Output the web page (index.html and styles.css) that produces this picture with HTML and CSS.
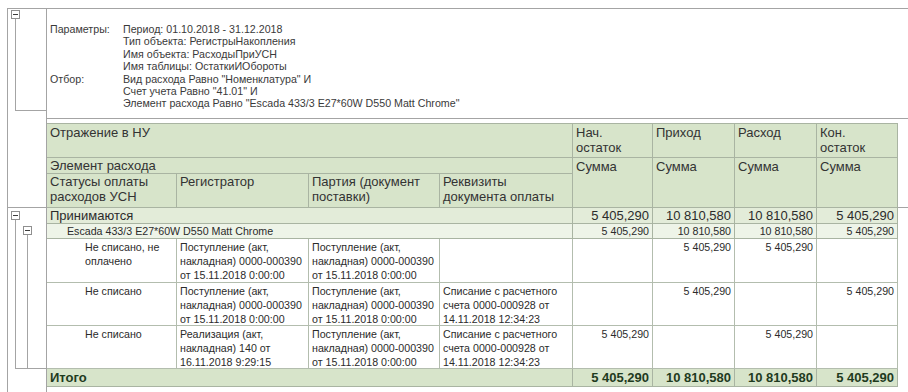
FILE: index.html
```html
<!DOCTYPE html>
<html lang="ru">
<head>
<meta charset="utf-8">
<title>Отчет</title>
<link rel="stylesheet" href="styles.css">
</head>
<body>
<div class="sheet">
  <div class="gut g-params"><span class="tg"></span><div class="bracket"></div></div>
  <div class="params">
    <span class="lbl">Параметры:</span><span>Период: 01.10.2018 - 31.12.2018</span>
    <span></span><span>Тип объекта: РегистрыНакопления</span>
    <span></span><span>Имя объекта: РасходыПриУСН</span>
    <span></span><span>Имя таблицы: ОстаткиИОбороты</span>
    <span class="lbl">Отбор:</span><span>Вид расхода Равно "Номенклатура" И</span>
    <span></span><span>Счет учета Равно "41.01" И</span>
    <span></span><span>Элемент расхода Равно "Escada 433/3 E27*60W D550 Matt Chrome"</span>
  </div>

  <div class="gut g-head"></div>
  <div class="spacer"></div>
  <div class="fill f-head"></div>

  <div class="hd wide r3">Отражение в НУ</div>
  <div class="hd r3">Нач.<br>остаток</div>
  <div class="hd r3">Приход</div>
  <div class="hd r3">Расход</div>
  <div class="hd r3">Кон.<br>остаток</div>

  <div class="hd wide r4 tight">Элемент расхода</div>
  <div class="hd sum">Сумма</div>
  <div class="hd sum">Сумма</div>
  <div class="hd sum">Сумма</div>
  <div class="hd sum">Сумма</div>

  <div class="hd r5 tight">Статусы оплаты<br>расходов УСН</div>
  <div class="hd r5 tight">Регистратор</div>
  <div class="hd r5 tight">Партия (документ<br>поставки)</div>
  <div class="hd r5 tight">Реквизиты<br>документа оплаты</div>

  <div class="gut g-prin"><span class="tg"></span></div>
  <div class="prin wide">Принимаются</div>
  <div class="prin num">5 405,290</div>
  <div class="prin num">10 810,580</div>
  <div class="prin num">10 810,580</div>
  <div class="prin num">5 405,290</div>
  <div class="fill f-body"></div>

  <div class="gut g-esc"><span class="tg"></span></div>
  <div class="esc wide">Escada 433/3 E27*60W D550 Matt Chrome</div>
  <div class="esc num">5 405,290</div>
  <div class="esc num">10 810,580</div>
  <div class="esc num">10 810,580</div>
  <div class="esc num">5 405,290</div>

  <div class="gut g-det"></div>
  <div class="det status">Не списано, не<br>оплачено</div>
  <div class="det">Поступление (акт,<br>накладная) 0000-000390<br>от 15.11.2018 0:00:00</div>
  <div class="det">Поступление (акт,<br>накладная) 0000-000390<br>от 15.11.2018 0:00:00</div>
  <div class="det"></div>
  <div class="det num"></div>
  <div class="det num">5 405,290</div>
  <div class="det num">5 405,290</div>
  <div class="det num"></div>

  <div class="gut g-det"></div>
  <div class="det status">Не списано</div>
  <div class="det">Поступление (акт,<br>накладная) 0000-000390<br>от 15.11.2018 0:00:00</div>
  <div class="det">Поступление (акт,<br>накладная) 0000-000390<br>от 15.11.2018 0:00:00</div>
  <div class="det">Списание с расчетного<br>счета 0000-000928 от<br>14.11.2018 12:34:23</div>
  <div class="det num"></div>
  <div class="det num">5 405,290</div>
  <div class="det num"></div>
  <div class="det num">5 405,290</div>

  <div class="gut g-det g-last"></div>
  <div class="det status">Не списано</div>
  <div class="det">Реализация (акт,<br>накладная) 140 от<br>16.11.2018 9:29:15</div>
  <div class="det">Поступление (акт,<br>накладная) 0000-000390<br>от 15.11.2018 0:00:00</div>
  <div class="det">Списание с расчетного<br>счета 0000-000928 от<br>14.11.2018 12:34:23</div>
  <div class="det num">5 405,290</div>
  <div class="det num"></div>
  <div class="det num">5 405,290</div>
  <div class="det num"></div>

  <div class="gut"></div>
  <div class="tot wide">Итого</div>
  <div class="tot num">5 405,290</div>
  <div class="tot num">10 810,580</div>
  <div class="tot num">10 810,580</div>
  <div class="tot num">5 405,290</div>

  <div class="gut"></div>
</div>
</body>
</html>
```

FILE: styles.css
```css
html, body {
  margin: 0;
  padding: 0;
  overflow: hidden;
  background: #ffffff;
}

body {
  font-family: "Liberation Sans", Arial, sans-serif;
  color: #333333;
}

.sheet {
  margin: 8px 0 0 7px;
  border-top: 1px solid #a4a4a4;
  display: grid;
  grid-template-columns: 40px 130px 132px 131px 133px 80px 82px 82px 81px 1fr;
  grid-template-rows: 110px 5px 34px 16px 34px 16px 15px 44px 43px 43px 18px 5px;
}

.sheet > div {
  box-sizing: border-box;
  min-width: 0;
  white-space: nowrap;
}

/* ---------- gutter (row groups) ---------- */
.gut {
  grid-column: 1;
  border-left: 1px solid #a4a4a4;
  border-right: 1px solid #a4a4a4;
}

.tg {
  box-sizing: border-box;
  display: flex;
  align-items: center;
  justify-content: center;
  width: 9px;
  height: 9px;
  border: 1px solid #8f8f8f;
  background: #ffffff;
}

.tg::after {
  content: "";
  width: 5px;
  height: 1px;
  background: #3c3c3c;
}

.g-params {
  padding: 1px 0 0 3px;
}

.bracket {
  box-sizing: border-box;
  margin-left: 4px;
  width: 31px;
  height: 92px;
  border-left: 1px solid #a4a4a4;
  border-bottom: 1px solid #a4a4a4;
}

.g-head {
  grid-row: 2 / 6;
  border-bottom: 1px solid #a4a4a4;
}

.g-prin {
  padding: 3px 0 0 3px;
  background: linear-gradient(#a4a4a4, #a4a4a4) 7px 12px / 1px 100% no-repeat;
}

.g-esc {
  padding: 2px 0 0 15px;
  background:
    linear-gradient(#a4a4a4, #a4a4a4) 7px 0 / 1px 100% no-repeat,
    linear-gradient(#a4a4a4, #a4a4a4) 19px 11px / 1px 100% no-repeat;
}

.g-det {
  background:
    linear-gradient(#a4a4a4, #a4a4a4) 7px 0 / 1px 100% no-repeat,
    linear-gradient(#a4a4a4, #a4a4a4) 19px 0 / 1px 100% no-repeat;
}

.g-last {
  background:
    linear-gradient(#a4a4a4, #a4a4a4) 7px 0 / 1px 100% no-repeat,
    linear-gradient(#a4a4a4, #a4a4a4) 19px 0 / 1px 100% no-repeat,
    linear-gradient(#a4a4a4, #a4a4a4) 7px 100% / 31px 1px no-repeat;
}

/* ---------- parameters block ---------- */
.params {
  grid-column: 2 / 11;
  border-bottom: 1px solid #a4a4a4;
  padding: 14px 0 0 3px;
  display: grid;
  grid-template-columns: 73px auto;
  align-content: start;
  font-size: 10.67px;
  line-height: 12.4px;
  color: #3a3a3a;
}

.spacer {
  grid-column: 2 / 10;
  border-bottom: 1px solid #a9b4a2;
}

.fill {
  grid-column: 10;
}

.f-head {
  grid-row: 2 / 6;
  border-bottom: 1px solid #a4a4a4;
}

.f-body {
  grid-row: 6 / 13;
}

/* ---------- header ---------- */
.hd {
  background: #d7e4ca;
  border-right: 1px solid #a9b4a2;
  border-bottom: 1px solid #a9b4a2;
  padding: 1px 3px 0;
  font-size: 13px;
  line-height: 15px;
  color: #333333;
}

.hd.tight {
  padding-top: 0;
}

.wide {
  grid-column: 2 / 6;
}

.sum {
  grid-row: span 2;
}

/* ---------- body rows ---------- */
.num {
  text-align: right;
}

.prin {
  background: #e3ecd9;
  border-right: 1px solid #a9b4a2;
  border-bottom: 1px solid #a9b4a2;
  padding: 1px 3px 0;
  font-size: 13px;
  line-height: 14px;
  color: #2b2b2b;
}

.esc {
  background: #eef4e8;
  border-right: 1px solid #a9b4a2;
  border-bottom: 1px solid #a9b4a2;
  padding: 0 3px 0;
  font-size: 10.67px;
  line-height: 14px;
  color: #2b2b2b;
}

.esc.wide {
  padding-left: 20px;
}

.det {
  border-right: 1px solid #b3bdae;
  border-bottom: 1px solid #b3bdae;
  padding: 1px 3px 0;
  font-size: 10.67px;
  line-height: 14px;
  color: #2b2b2b;
}

.det.status {
  padding-left: 38px;
}

.tot {
  background: #d7e4ca;
  border-right: 1px solid #a9b4a2;
  border-bottom: 1px solid #a9b4a2;
  padding: 1px 3px 0;
  font-size: 13px;
  line-height: 15px;
  font-weight: bold;
  color: #1f3b1e;
}
```
